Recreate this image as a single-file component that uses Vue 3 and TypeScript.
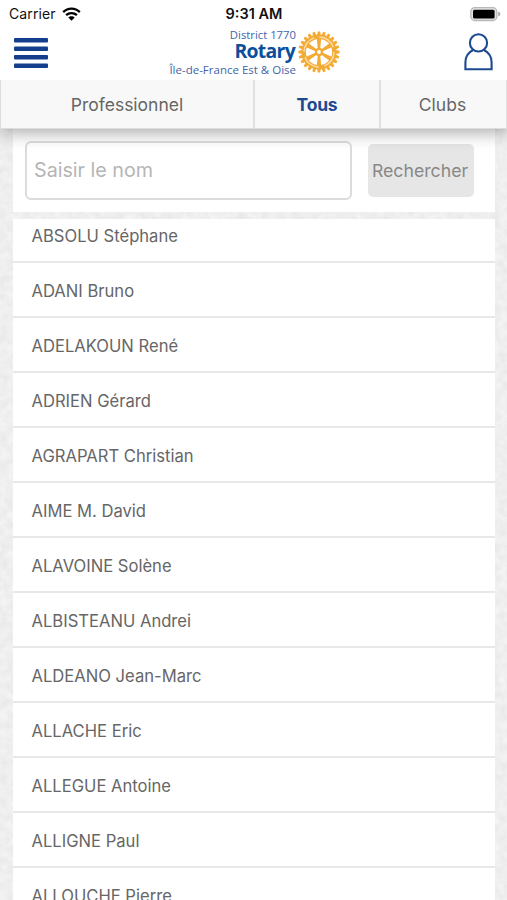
<script setup lang="ts">
import { ref } from 'vue'

interface Tab {
  id: string
  label: string
}

const tabs: Tab[] = [
  { id: 'pro', label: 'Professionnel' },
  { id: 'all', label: 'Tous' },
  { id: 'clubs', label: 'Clubs' },
]
const activeTab = ref<string>('all')
const query = ref<string>('')

const members: string[] = [
  'ABSOLU Stéphane',
  'ADANI Bruno',
  'ADELAKOUN René',
  'ADRIEN Gérard',
  'AGRAPART Christian',
  'AIME M. David',
  'ALAVOINE Solène',
  'ALBISTEANU Andrei',
  'ALDEANO Jean-Marc',
  'ALLACHE Eric',
  'ALLEGUE Antoine',
  'ALLIGNE Paul',
  'ALLOUCHE Pierre',
]

const teeth: number[] = Array.from({ length: 24 }, (_, i) => i * 15)
const spokes: number[] = Array.from({ length: 6 }, (_, i) => i * 60)
</script>

<template>
  <div class="screen">
    <div class="status">
      <div class="carrier">
        <span>Carrier</span>
        <svg class="wifi" width="19" height="14" viewBox="0 0 19 14" fill="none" stroke="#000" stroke-width="2.3">
          <path d="M1.2 5.1C5.8 .5 13.2 .5 17.8 5.1" />
          <path d="M4.1 8.2C7.1 5.3 11.9 5.3 14.9 8.2" />
          <path d="M6.3 10.4C8 8.7 11 8.7 12.7 10.4L9.5 13.7Z" fill="#000" stroke="none" />
        </svg>
      </div>
      <div class="time">9:31 AM</div>
      <svg class="battery" width="32" height="16" viewBox="0 0 32 16">
        <rect x="1.8" y="1.7" width="26" height="12.8" rx="4" fill="#e4e4e4" stroke="#b8b8b8" stroke-width="1.3" />
        <rect x="4" y="3.7" width="21.6" height="8.8" rx="1.5" fill="#000" />
        <path d="M29.2 5.6Q31.4 6.4 31.4 8T29.2 10.5Z" fill="#aaa" />
      </svg>
    </div>

    <header class="header">
      <svg class="burger" width="34" height="31" viewBox="0 0 34 31" fill="#153f8c">
        <rect x="0" y="0" width="34" height="4.6" rx="1" />
        <rect x="0" y="8.5" width="34" height="4.6" rx="1" />
        <rect x="0" y="17" width="34" height="4.6" rx="1" />
        <rect x="0" y="25.5" width="34" height="4.6" rx="1" />
      </svg>
      <div class="brand">
        <div class="brand-text">
          <span class="district">District 1770</span>
          <span class="rotary">Rotary</span>
          <span class="region">Île-de-France Est &amp; Oise</span>
        </div>
        <svg class="wheel" width="42" height="42" viewBox="-21 -21 42 42">
          <g fill="#f3ab35">
            <path v-for="a in teeth" :key="a" d="M-1.9 -16.5L-1.2 -20.6H1.2L1.9 -16.5Z" :transform="`rotate(${a})`" />
          </g>
          <circle r="15.3" fill="none" stroke="#f3ab35" stroke-width="4.4" />
          <circle r="15" fill="none" stroke="#fbdca5" stroke-width="1.5" stroke-dasharray="18 5.56" />
          <g fill="#f3ab35">
            <path v-for="a in spokes" :key="a" d="M-1.2 -3L-2.2 -13.5H2.2L1.2 -3Z" :transform="`rotate(${a})`" />
          </g>
          <circle r="4.2" fill="#f3ab35" />
          <circle r="1.9" fill="#fff" />
        </svg>
      </div>
      <svg class="user" width="29" height="38" viewBox="0 0 29 38" fill="none" stroke="#1c4a91" stroke-width="2.1">
        <circle cx="14.5" cy="9.9" r="8.6" />
        <path d="M9 17C4.2 19.5 1.4 23.8 1.4 29.4V36.2H27.6V29.4C27.6 23.8 24.8 19.5 20 17" />
      </svg>
    </header>

    <nav class="tabs">
      <button
        v-for="tab in tabs"
        :key="tab.id"
        class="tab"
        :class="[tab.id, { active: tab.id === activeTab }]"
        @click="activeTab = tab.id"
      >
        {{ tab.label }}
      </button>
    </nav>

    <main class="content">
      <svg class="texture" width="507" height="771">
        <filter id="paper" x="0" y="0" width="100%" height="100%" color-interpolation-filters="sRGB">
          <feTurbulence type="fractalNoise" baseFrequency="0.13" numOctaves="4" seed="8" />
          <feColorMatrix values="0.07 0 0 0 0.9  0.07 0 0 0 0.9  0.07 0 0 0 0.9  0 0 0 0 1" />
        </filter>
        <rect width="507" height="771" filter="url(#paper)" />
      </svg>
      <form class="search" @submit.prevent>
        <input v-model="query" class="field" type="text" placeholder="Saisir le nom" />
        <button class="submit" type="submit">Rechercher</button>
      </form>
      <div class="list">
        <ul class="rows">
          <li v-for="name in members" :key="name" class="row"><span>{{ name }}</span></li>
        </ul>
      </div>
    </main>
  </div>
</template>

<style>
body {
  background: #fff;
  overflow: hidden;
}
</style>

<style scoped>
.screen {
  width: 507px;
  height: 900px;
  overflow: hidden;
  display: flex;
  flex-direction: column;
  background: #fff;
  color: #666;
  font-family: Inter, "Liberation Sans", sans-serif;
}
.status {
  flex: none;
  height: 28px;
  display: grid;
  grid-template-columns: 1fr auto 1fr;
  align-items: center;
  box-sizing: border-box;
  padding: 0 6px 1px 9px;
  color: #111;
}
.carrier {
  display: flex;
  align-items: center;
  gap: 6px;
  font-size: 14px;
  letter-spacing: 0.1px;
}
.time {
  margin-left: -2px;
  font-size: 14.5px;
  font-weight: 600;
}
.battery {
  justify-self: end;
}
.header {
  flex: none;
  height: 52px;
  display: flex;
  align-items: flex-start;
  box-sizing: border-box;
  padding: 0 14px;
}
.burger {
  margin-top: 10px;
}
.brand {
  display: flex;
  margin-left: 121px;
  gap: 2px;
}
.brand-text {
  width: 127px;
  display: flex;
  flex-direction: column;
  align-items: flex-end;
  white-space: nowrap;
  color: #4165ab;
  font-family: "Open Sans", "Noto Sans", sans-serif;
}
.district {
  font-size: 11.3px;
  line-height: 13px;
}
.rotary {
  color: #0b4f9c;
  font-size: 19.4px;
  font-weight: 700;
  line-height: 20px;
  letter-spacing: -0.7px;
  margin-right: 1px;
}
.region {
  font-size: 11.5px;
  line-height: 16px;
  margin-top: 1px;
}
.wheel {
  margin-top: 3px;
}
.user {
  margin: 5px 0 0 auto;
}
.tabs {
  position: relative;
  z-index: 1;
  flex: none;
  height: 49px;
  display: grid;
  grid-template-columns: 254px 126px 127px;
  box-sizing: border-box;
  border-left: 1px solid #ddd;
  background: #f8f8f8;
  box-shadow: 0 3px 18px rgba(0, 0, 0, 0.36);
  clip-path: inset(0 0 -30px 0);
}
.tab {
  border: 0;
  border-right: 2px solid #e0e0e0;
  border-bottom: 1px solid #ddd;
  padding: 0;
  background: none;
  color: #666;
  font: 400 17.5px Inter, sans-serif;
}
.tab.clubs {
  padding-right: 2px;
}
.tab.active {
  color: #1d4993;
  font-weight: 700;
  letter-spacing: -0.2px;
}
.content {
  position: relative;
  flex: 1;
  min-height: 0;
  display: flex;
  flex-direction: column;
  gap: 7px;
  padding: 0 12px 0 13px;
  background: #efefef;
}
.texture {
  position: absolute;
  left: 0;
  top: 0;
}
.search {
  position: relative;
  flex: none;
  height: 83px;
  display: flex;
  align-items: center;
  gap: 16px;
  box-sizing: border-box;
  padding: 0 21px 0 12px;
  background: #fff;
}
.field {
  width: 327px;
  height: 59px;
  box-sizing: border-box;
  border: 2px solid #dcdcdc;
  border-radius: 6px;
  padding: 0 7px 1px;
  background: transparent;
  color: #555;
  font: 400 19.7px Inter, sans-serif;
  outline: 0;
}
.field::placeholder {
  color: #b5b5b5;
}
.submit {
  width: 106px;
  height: 53px;
  border: 0;
  border-radius: 5px;
  padding: 0 2px 0 0;
  background: #e6e6e6;
  color: #888;
  font: 400 17.7px Inter, sans-serif;
}
.list {
  position: relative;
  flex: 1;
  min-height: 0;
  overflow: hidden;
  background: #fff;
}
.rows {
  list-style: none;
  margin: -11px 0 0;
  padding: 0;
}
.row {
  height: 55px;
  display: flex;
  align-items: center;
  box-sizing: border-box;
  padding: 3px 18.5px 0;
  border-bottom: 2px solid #e8e8e8;
  font-size: 16.6px;
}
</style>
